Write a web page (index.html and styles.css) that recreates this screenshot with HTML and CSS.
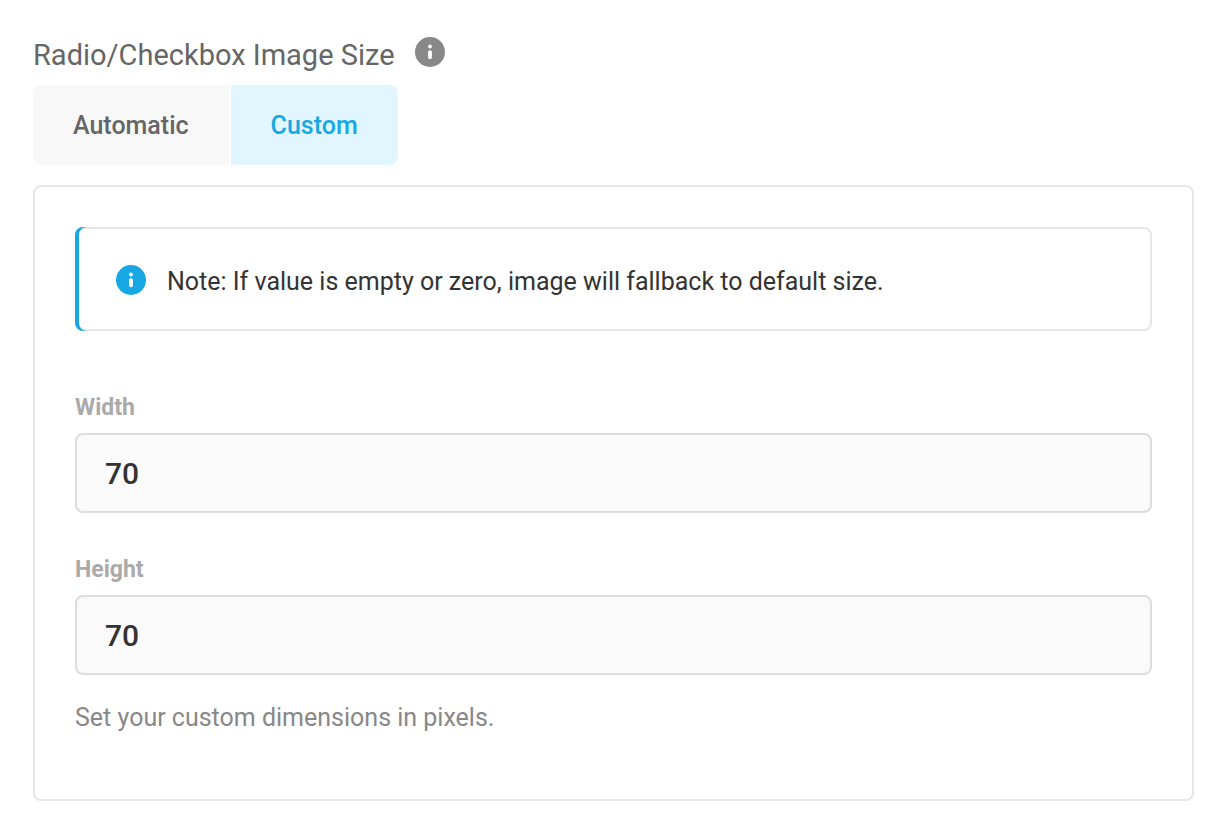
FILE: index.html
```html
<!DOCTYPE html>
<html lang="en">
<head>
<meta charset="utf-8">
<meta name="viewport" content="width=device-width, initial-scale=1">
<title>Image Size</title>
<link rel="stylesheet" href="styles.css">
</head>
<body>
<main class="settings">
  <header class="heading">
    <h1 class="title">Radio/Checkbox Image Size</h1>
    <button class="help" type="button" aria-label="More information">
      <svg class="icon" viewBox="0 0 30 30" aria-hidden="true"><circle cx="15" cy="15" r="15" fill="currentColor"/><circle cx="15" cy="9.5" r="1.9" fill="#fff"/><rect x="13.1" y="13.2" width="3.8" height="9" rx="1.9" fill="#fff"/></svg>
    </button>
  </header>
  <div class="tabs" role="tablist">
    <button class="tab" type="button" role="tab" aria-selected="false">Automatic</button>
    <button class="tab tab-active" type="button" role="tab" aria-selected="true">Custom</button>
  </div>
  <section class="panel">
    <div class="notice">
      <svg class="icon notice-icon" viewBox="0 0 30 30" aria-hidden="true"><circle cx="15" cy="15" r="15" fill="currentColor"/><circle cx="15" cy="9.5" r="1.9" fill="#fff"/><rect x="13.1" y="13.2" width="3.8" height="9" rx="1.9" fill="#fff"/></svg>
      <p class="notice-text">Note: If value is empty or zero, image will fallback to default size.</p>
    </div>
    <div class="fields">
      <div class="field">
        <label class="label" for="width">Width</label>
        <input class="input" id="width" type="text" inputmode="numeric" value="70">
      </div>
      <div class="field">
        <label class="label" for="height">Height</label>
        <input class="input" id="height" type="text" inputmode="numeric" value="70">
      </div>
    </div>
    <p class="hint">Set your custom dimensions in pixels.</p>
  </section>
</main>
</body>
</html>
```
FILE: styles.css
```css
* { box-sizing: border-box; }
body { margin: 0; background: #fff; font-family: Roboto, sans-serif; color: #333; }
.settings { padding: 32px 26px 32px 33px; }
.heading { display: flex; align-items: center; gap: 20px; padding-bottom: 8px; }
.title { margin: 0; padding-top: 1px; font-size: 29px; line-height: 44px; font-weight: 400; color: #666; }
.help { display: flex; padding: 0; margin-bottom: 5px; border: 0; background: none; color: #888; }
.icon { display: block; width: 30px; height: 30px; flex: none; }
.tabs { display: flex; gap: 2px; margin-bottom: 20px; }
.tab { height: 80px; padding: 2px 40px 0; border: 0; font: 500 25px/40px Roboto, sans-serif; color: #666; background: #f8f8f8; border-radius: 8px 0 0 8px; }
.tab-active { color: #17a8e3; background: #e1f6ff; border-radius: 0 8px 8px 0; }
.panel { padding: 40px 40px 58px; border: 2px solid #e6e6e6; border-radius: 8px; }
.notice { position: relative; display: flex; gap: 21px; align-items: center; padding: 29px 39px 27px; margin-bottom: 60px; border: 2px solid #e6e6e6; border-radius: 8px; }
.notice::before { content: ""; position: absolute; inset: -2px; border-radius: 8px; box-shadow: inset 4px 0 #17a8e3; pointer-events: none; }
.notice-icon { color: #17a8e3; }
.notice-text { margin: 0; padding-top: 4px; font-size: 25px; line-height: 40px; }
.fields { display: grid; gap: 40px; margin-bottom: 20px; }
.label { display: block; margin-bottom: 8px; font-size: 23px; line-height: 34px; font-weight: 700; color: #aaa; }
.input { display: block; width: 100%; height: 80px; padding: 0 28px; border: 2px solid #ddd; border-radius: 8px; background: #fafafa; color: #333; font: 500 30px/40px Roboto, sans-serif; }
.hint { margin: 0; font-size: 25px; line-height: 46px; color: #888; }
```
